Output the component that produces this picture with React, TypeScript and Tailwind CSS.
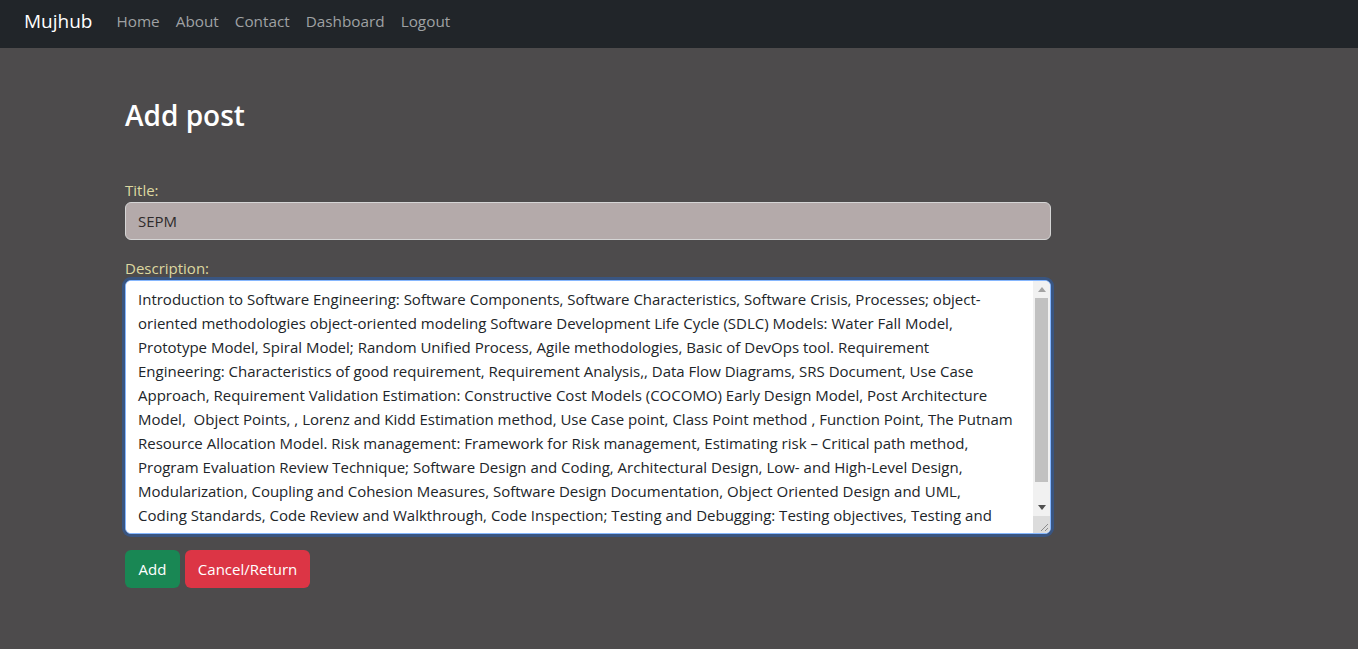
import { useState } from "react";

const links = ["Home", "About", "Contact", "Dashboard", "Logout"];

const description = [
  "Introduction to Software Engineering: Software Components, Software Characteristics, Software Crisis, Processes; object-",
  "oriented methodologies object-oriented modeling Software Development Life Cycle (SDLC) Models: Water Fall Model,",
  "Prototype Model, Spiral Model; Random Unified Process, Agile methodologies, Basic of DevOps tool. Requirement",
  "Engineering: Characteristics of good requirement, Requirement Analysis,, Data Flow Diagrams, SRS Document, Use Case",
  "Approach, Requirement Validation Estimation: Constructive Cost Models (COCOMO) Early Design Model, Post Architecture",
  "Model,  Object Points, , Lorenz and Kidd Estimation method, Use Case point, Class Point method , Function Point, The Putnam",
  "Resource Allocation Model. Risk management: Framework for Risk management, Estimating risk – Critical path method,",
  "Program Evaluation Review Technique; Software Design and Coding, Architectural Design, Low- and High-Level Design,",
  "Modularization, Coupling and Cohesion Measures, Software Design Documentation, Object Oriented Design and UML,",
  "Coding Standards, Code Review and Walkthrough, Code Inspection; Testing and Debugging: Testing objectives, Testing and",
  "debugging techniques, unit testing, integration testing, system testing and acceptance testing.",
].join("\n");

function Navbar() {
  return (
    <nav className="h-12 bg-[#212529] flex items-center px-6 pb-[6px]">
      <a className="text-[19px] text-white mr-4 leading-[30px]">Mujhub</a>
      <ul className="flex items-center">
        {links.map((l) => (
          <li key={l}>
            <a className="block px-2 text-[15.3px] text-[#9fa1a3] leading-6">{l}</a>
          </li>
        ))}
      </ul>
    </nav>
  );
}

// windows-style scrollbar, the page is shot with scrollbars hidden
function Scrollbar() {
  return (
    <div className="w-[17px] h-full flex flex-col bg-[#f1f1f1]">
      <div className="h-[17px] flex items-center justify-center">
        <svg width="8" height="5" viewBox="0 0 8 5"><path d="M4 0L8 5H0z" fill="#a3a3a3" /></svg>
      </div>
      <div className="h-[184px] px-[2px]">
        <div className="h-full bg-[#c1c1c1]" />
      </div>
      <div className="flex-1" />
      <div className="h-[17px] flex items-center justify-center">
        <svg width="8" height="5" viewBox="0 0 8 5"><path d="M0 0H8L4 5z" fill="#505050" /></svg>
      </div>
      <div className="h-[17px] bg-[#dcdcdc] flex items-end justify-end">
        <svg width="17" height="17" viewBox="0 0 17 17">
          <path d="M15 8L8 15M15 12L12 15" stroke="#8a8a8a" strokeWidth="1" />
        </svg>
      </div>
    </div>
  );
}

export default function App() {
  const [title, setTitle] = useState("SEPM");

  return (
    <div className="min-h-screen bg-[#4d4b4c] font-['Open_Sans','Noto_Sans',sans-serif]">
      <Navbar />
      <main className="pt-12 pl-[125px]">
        <h2 className="text-[28px] leading-[38px] font-semibold text-white">Add post</h2>

        <form className="mt-[44px] w-[926px]" onSubmit={(e) => e.preventDefault()}>
          <div className="mb-4">
            <label className="block text-[15px] leading-6 text-[#ddd8a0]">Title:</label>
            <input
              value={title}
              onChange={(e) => setTitle(e.target.value)}
              className="block w-full h-[38px] px-3 rounded-md border border-[#d5d5d5] bg-[#b4aaaa] text-[#2e2a2b] text-[15px] outline-none"
            />
          </div>

          <div className="mb-4">
            <label className="block text-[15px] leading-6 text-[#ddd8a0]">Description:</label>
            <div className="flex w-full h-[254px] rounded-md border border-[#86b7fe] bg-white overflow-hidden shadow-[0_0_0_3px_rgba(13,110,253,0.3)]">
              <textarea
                defaultValue={description}
                wrap="off"
                className="flex-1 h-full px-3 py-1.5 bg-white text-[#212529] text-[15px] leading-6 outline-none resize-none overflow-hidden whitespace-pre"
              />
              <Scrollbar />
            </div>
          </div>

          <div className="flex gap-[5px]">
            <button className="h-[38px] px-[13.5px] rounded-md bg-[#198754] text-white text-[15px]">Add</button>
            <button className="h-[38px] px-[13px] rounded-md bg-[#dc3545] text-white text-[15px]">Cancel/Return</button>
          </div>
        </form>
      </main>
    </div>
  );
}
